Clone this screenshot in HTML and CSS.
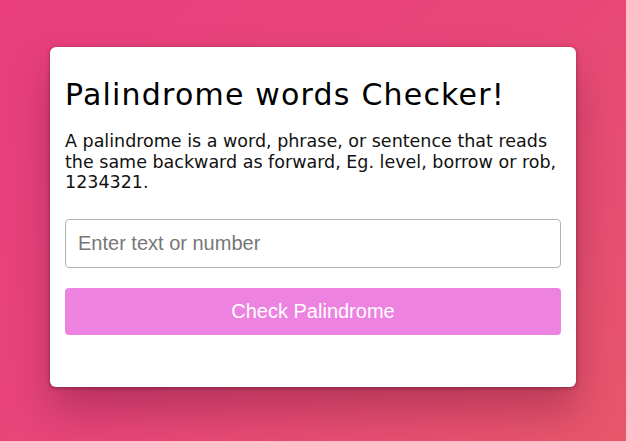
FILE: index.html
```html
<!DOCTYPE html>
<html lang="en">
<head>
<meta charset="utf-8">
<title>Palindrome words Checker</title>
<link rel="stylesheet" href="styles.css">
</head>
<body>
  <main class="card">
    <h1 class="title">Palindrome words Checker!</h1>
    <p class="desc">A palindrome is a word, phrase, or sentence that reads the same backward as forward, Eg. level, borrow or rob, 1234321.</p>
    <input class="field" type="text" placeholder="Enter text or number">
    <button class="check" type="button">Check Palindrome</button>
  </main>
</body>
</html>
```
FILE: styles.css
```css
* { box-sizing: border-box; }
html, body { height: 100%; }
body {
  margin: 0;
  padding-top: 47px;
  background: linear-gradient(135deg, #e83e7d 0%, #e8467a 50%, #e8566a 100%);
  font-family: "DejaVu Sans", "Open Sans", sans-serif;
  overflow: hidden;
}
.card {
  width: 526px;
  height: 340px;
  margin: 0 auto;
  background: #fff;
  border-radius: 6px;
  padding: 28px 15px 15px;
  display: flex;
  flex-direction: column;
  box-shadow: 0 1px 4px rgba(0,0,0,0.35), 0 24px 40px rgba(60,0,30,0.28);
}
.title {
  margin: 0;
  font-size: 30px;
  font-weight: 400;
  line-height: 40px;
  letter-spacing: 1.2px;
  color: #000;
}
.desc {
  margin: 16px 0 0;
  font-size: 17.5px;
  line-height: 20.5px;
  letter-spacing: 0;
  color: #111;
}
.field {
  margin-top: 26px;
  height: 49px;
  width: 100%;
  border: 1px solid #b3b3b3;
  border-radius: 4px;
  padding: 0 12px;
  font-family: "Liberation Sans", Arial, sans-serif;
  font-size: 20px;
  color: #333;
  outline: none;
}
.field::placeholder { color: #777; }
.check {
  margin-top: 20px;
  height: 47px;
  width: 100%;
  border: none;
  border-radius: 4px;
  background: #ee82e0;
  color: #fff;
  font-family: "Liberation Sans", Arial, sans-serif;
  font-size: 20px;
}
```
